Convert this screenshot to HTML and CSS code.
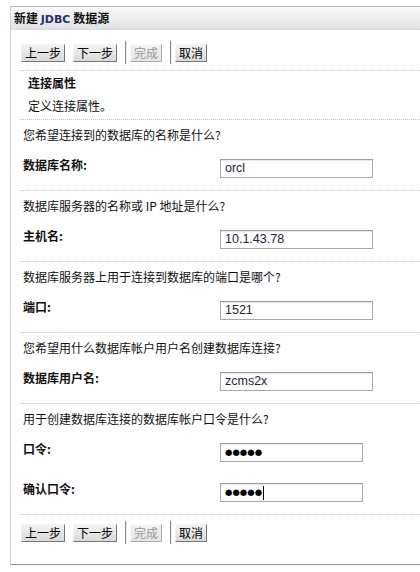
FILE: index.html
```html
<!DOCTYPE html>
<html lang="zh-CN">
<head>
<meta charset="utf-8">
<title>新建 JDBC 数据源</title>
<link rel="stylesheet" href="styles.css">
</head>
<body>
<div class="panel">
  <div class="header">新建 <span class="latin">JDBC</span> 数据源</div>
  <div class="content">
    <div class="toolbar">
      <span class="btn">上一步</span>
      <span class="btn">下一步</span>
      <span class="sep"></span>
      <span class="btn disabled">完成</span>
      <span class="sep"></span>
      <span class="btn">取消</span>
    </div>

    <div class="intro">
      <div class="intro-title">连接属性</div>
      <div class="intro-desc">定义连接属性。</div>
    </div>

    <div class="section">
      <div class="question">您希望连接到的数据库的名称是什么?</div>
      <div class="field">
        <span class="label">数据库名称:</span>
        <div class="input">orcl</div>
      </div>
    </div>

    <div class="section">
      <div class="question">数据库服务器的名称或 IP 地址是什么?</div>
      <div class="field">
        <span class="label">主机名:</span>
        <div class="input">10.1.43.78</div>
      </div>
    </div>

    <div class="section">
      <div class="question">数据库服务器上用于连接到数据库的端口是哪个?</div>
      <div class="field">
        <span class="label">端口:</span>
        <div class="input">1521</div>
      </div>
    </div>

    <div class="section">
      <div class="question">您希望用什么数据库帐户用户名创建数据库连接?</div>
      <div class="field">
        <span class="label">数据库用户名:</span>
        <div class="input">zcms2x</div>
      </div>
    </div>

    <div class="section">
      <div class="question">用于创建数据库连接的数据库帐户口令是什么?</div>
      <div class="field">
        <span class="label">口令:</span>
        <div class="input pw"><span class="dots">●●●●●</span></div>
      </div>
      <div class="field second">
        <span class="label">确认口令:</span>
        <div class="input pw"><span class="dots">●●●●●</span><span class="caret"></span></div>
      </div>
    </div>

    <div class="toolbar bottom">
      <span class="btn">上一步</span>
      <span class="btn">下一步</span>
      <span class="sep"></span>
      <span class="btn disabled">完成</span>
      <span class="sep"></span>
      <span class="btn">取消</span>
    </div>
  </div>
</div>
</body>
</html>
```

FILE: styles.css
```css
html, body {
  margin: 0;
  padding: 0;
  background: #ffffff;
}

body {
  font-family: "Noto Sans CJK SC", "DejaVu Sans", sans-serif;
  font-size: 12px;
  color: #111;
}

.panel {
  margin: 6px 0 0 10px;
  border-top: 1px solid #b4b9c1;
  border-left: 1px solid #cfd1d1;
  border-bottom: 1px solid #8c9692;
  box-shadow: 0 2px 0 #c9cecc;
  height: 559px;
  box-sizing: border-box;
}

.header {
  height: 22px;
  line-height: 22px;
  padding-left: 3px;
  font-weight: bold;
  font-size: 12px;
  color: #111;
  background: linear-gradient(#f9f9f9, #e2e2e2);
  border-bottom: 1px solid #dadada;
}

.latin {
  color: #24336e;
  font-family: "DejaVu Sans", sans-serif;
  font-size: 11px;
}

.content {
  padding-left: 9px;
}

.toolbar {
  display: flex;
  align-items: center;
  height: 23px;
  padding: 11px 0 6px 1px;
}

.toolbar.bottom {
  padding: 6px 0 0 1px;
  border-top: 1px dotted #c4c4c4;
}

.btn {
  display: inline-block;
  height: 18px;
  line-height: 16px;
  box-sizing: border-box;
  padding: 0 3px;
  margin-right: 8px;
  border: 1px solid;
  border-color: #f4f4f4 #777 #777 #f4f4f4;
  background: linear-gradient(#f3f3f3, #d9d9d9);
  color: #000;
  font-size: 12px;
}

.btn.disabled {
  color: #9a9a9a;
  background: linear-gradient(#f4f4f4, #e3e3e3);
  border-color: #fafafa #aaa #aaa #fafafa;
}

.sep {
  display: inline-block;
  width: 1px;
  height: 23px;
  background: #8a8a8a;
  border-right: 1px solid #ececec;
  margin-right: 3px;
}

.intro {
  border-top: 1px dotted #c4c4c4;
  padding: 3px 0 4px 8px;
}

.intro-title {
  font-weight: bold;
  line-height: 18px;
}

.intro-desc {
  line-height: 18px;
  margin-top: 5px;
}

.section {
  border-top: 1px dotted #c4c4c4;
  padding: 6px 0 12px 3px;
}

.question {
  line-height: 18px;
}

.field {
  display: flex;
  align-items: flex-start;
  margin-top: 15px;
}

.field.second {
  margin-top: 21px;
}

.label {
  width: 197px;
  flex: none;
  font-weight: bold;
  line-height: 14px;
  margin-top: -1px;
}

.input {
  width: 153px;
  height: 19px;
  box-sizing: border-box;
  border: 1px solid #a9a9a9;
  border-top-color: #9c9c9c;
  box-shadow: inset 0 1px 0 #e8e8e8;
  background: #fff;
  padding-left: 4px;
  font-family: "Liberation Sans", sans-serif;
  font-size: 12.5px;
  line-height: 17px;
  color: #23233a;
  display: flex;
  align-items: center;
}

.input.pw {
  width: 143px;
}

.dots {
  font-family: "DejaVu Sans", sans-serif;
  font-size: 8.5px;
  color: #000;
  letter-spacing: 0;
}

.caret {
  display: inline-block;
  width: 1px;
  height: 14px;
  background: #000;
  margin-left: 1px;
}
```
